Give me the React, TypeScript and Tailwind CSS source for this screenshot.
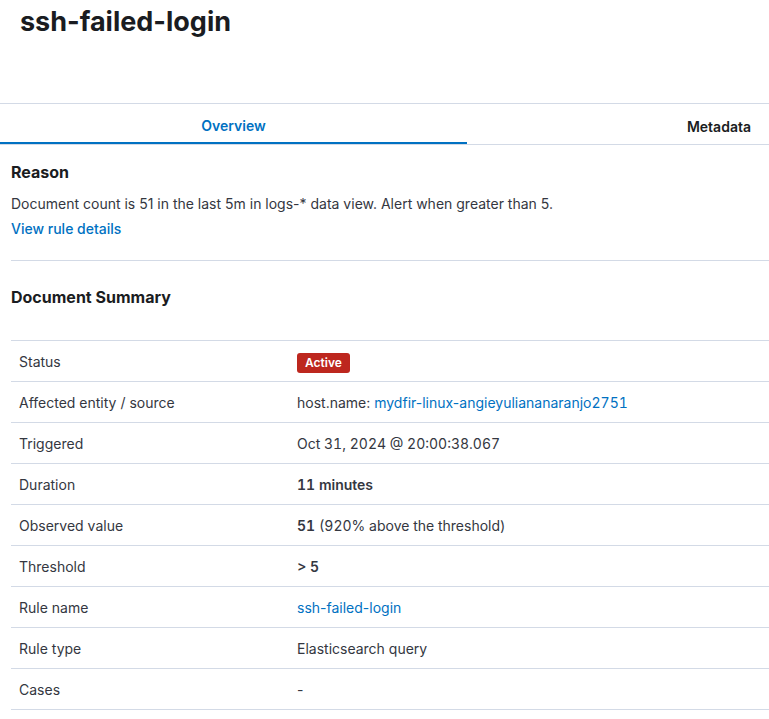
import React from "react";

type Row = { label: string; value: React.ReactNode };

const rows: Row[] = [
  {
    label: "Status",
    value: (
      <span className="inline-flex h-5 items-center rounded-[3px] bg-[#bd271e] px-2 text-xs font-semibold text-white">
        Active
      </span>
    ),
  },
  {
    label: "Affected entity / source",
    value: (
      <>
        host.name:{" "}
        <a className="text-[#0071c2]">
          mydfir-linux-angieyuliananaranjo<span className="tabular-nums">2751</span>
        </a>
      </>
    ),
  },
  { label: "Triggered", value: <span className="tabular-nums">Oct 31, 2024 @ 20:00:38.067</span> },
  { label: "Duration", value: <span className="font-semibold tabular-nums">11 minutes</span> },
  {
    label: "Observed value",
    value: (
      <span className="tabular-nums">
        <span className="font-semibold">51</span> (920% above the threshold)
      </span>
    ),
  },
  { label: "Threshold", value: <span className="font-semibold">&gt; 5</span> },
  { label: "Rule name", value: <a className="text-[#0071c2]">ssh-failed-login</a> },
  { label: "Rule type", value: "Elasticsearch query" },
  { label: "Cases", value: "-" },
];

export default function App() {
  return (
    <div className="min-h-screen bg-white font-['Inter',sans-serif] text-[#343741]">
      <h1 className="px-5 pt-[6px] text-[27px] font-bold leading-8 text-[#1a1c21]">ssh-failed-login</h1>

      <div className="mt-[65px] flex border-y border-[#d3dae6]">
        <button className="-mb-px h-10 w-[467px] border-b-2 border-[#0071c2] pt-[5px] text-sm font-semibold text-[#0071c2]">
          Overview
        </button>
        <button className="flex h-10 flex-1 items-center justify-end pr-[18px] pt-[5px] text-sm font-semibold text-[#1a1c21]">
          Metadata
        </button>
      </div>

      <div className="pl-[11px]">
        <h2 className="mt-[15px] text-base font-bold leading-6 text-[#1a1c21]">Reason</h2>
        <p className="mt-[10px] text-sm leading-5">
          Document count is 51 in the last 5m in logs-* data view. Alert when greater than 5.
        </p>
        <a className="mt-[5px] block text-sm font-medium leading-5 text-[#0071c2]">View rule details</a>

        <div className="mt-[21px] border-t border-[#d3dae6]" />

        <h2 className="mt-[24px] text-base font-bold leading-6 text-[#1a1c21]">Document Summary</h2>

        <div className="mt-[31px] border-t border-[#d3dae6]">
          {rows.map((row) => (
            <div key={row.label} className="flex h-[41px] items-center border-b border-[#d3dae6] pt-[2px] text-sm">
              <div className="w-[286px] pl-2">{row.label}</div>
              <div className="flex-1">{row.value}</div>
            </div>
          ))}
        </div>
      </div>
    </div>
  );
}
